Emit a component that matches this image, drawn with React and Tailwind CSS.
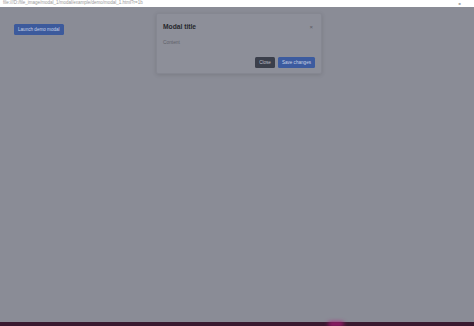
export default function App() {
  return (
    <div className="flex h-[326px] w-[474px] flex-col overflow-hidden font-['Liberation_Sans',Arial,sans-serif]">
      {/* address strip */}
      <div className="flex h-[7px] items-center justify-between bg-white px-[3px]">
        <span className="text-[4.5px] leading-none text-[#9a9a9a] whitespace-nowrap">
          file:///D:/file_image/modal_1/modal/example/demo/modal_1.html?r=1b
        </span>
        <span className="mr-[10px] text-[4px] leading-none text-[#aaa]">■</span>
      </div>

      {/* page under backdrop */}
      <div className="relative flex-1 bg-[#8a8c96]">
        <div className="flex px-[14px] pt-[17px]">
          <button className="rounded-[1.5px] bg-[#3c5a9c] px-[4px] py-[2px] text-[4.6px] leading-[7px] text-[#c9d2e4]">
            Launch demo modal
          </button>
        </div>

        {/* modal */}
        <div className="absolute left-[156px] top-[6px] w-[166px] rounded-[2px] border border-[#858791] bg-[#8d8f99] shadow-[0_1px_4px_rgba(0,0,0,0.12)]">
          <div className="flex items-center justify-between px-[6px] pt-[10px] pb-[5px]">
            <span className="text-[6.7px] font-bold leading-none text-[#26272c]">Modal title</span>
            <span className="mr-[2px] text-[6px] leading-none text-[#5a5c64]">×</span>
          </div>
          <div className="px-[6px] pt-[5px] pb-[6px] text-[4.8px] leading-none text-[#5e6068]">Content</div>
          <div className="flex justify-end gap-[3px] px-[6px] pt-[5px] pb-[5px]">
            <button className="rounded-[1.5px] bg-[#3b3f4b] px-[4px] py-[2px] text-[4.6px] leading-[7px] text-[#b9bcc4]">
              Close
            </button>
            <button className="rounded-[1.5px] bg-[#3c5b9f] px-[4px] py-[2px] text-[4.6px] leading-[7px] text-[#c9d2e4]">
              Save changes
            </button>
          </div>
        </div>
      </div>

      {/* bottom strip */}
      <div className="relative h-[4px] bg-[#3a1a30]">
        <div className="absolute left-[328px] top-0 h-[4px] w-[16px] rounded-full bg-[#b01a7a] blur-[2px]" />
      </div>
    </div>
  )
}
